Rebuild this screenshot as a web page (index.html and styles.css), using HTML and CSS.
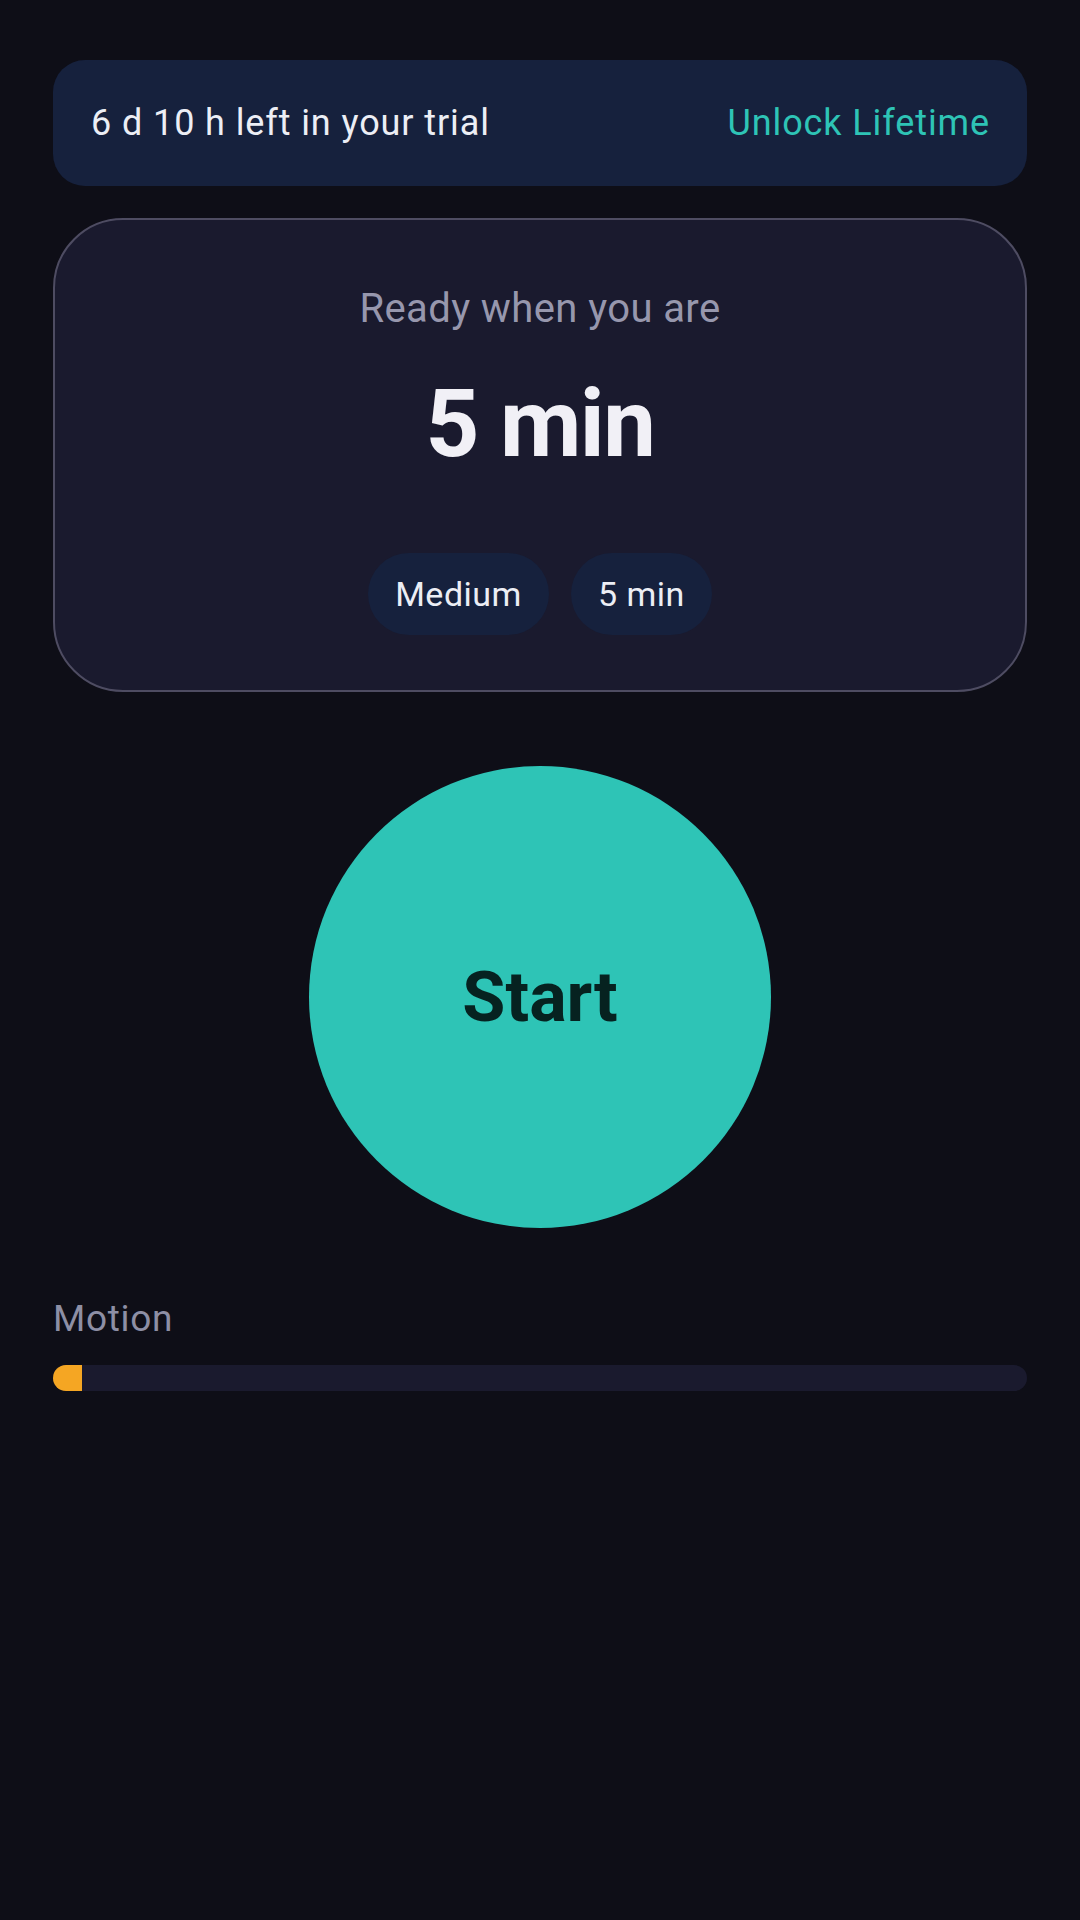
FILE: index.html
```html
<!DOCTYPE html>
<html lang="en">

<head>
    <meta charset="UTF-8" />
    <meta name="viewport" content="width=device-width, initial-scale=1.0" />
    <title>Session</title>
    <link rel="stylesheet" href="styles.css">
</head>

<body>
    <div class="trial">
        <span class="trial-left">6 d 10 h left in your trial</span>
        <a class="trial-unlock" href="#">Unlock Lifetime</a>
    </div>

    <div class="card">
        <p class="ready">Ready when you are</p>
        <p class="duration">5 min</p>
        <div class="chips">
            <span class="chip">Medium</span>
            <span class="chip">5 min</span>
        </div>
    </div>

    <button class="start" type="button">Start</button>

    <div class="motion">
        <p class="motion-label">Motion</p>
        <div class="motion-track">
            <div class="motion-fill" style="width: 3%;"></div>
        </div>
    </div>
</body>

</html>
```

FILE: styles.css
```css
body {
    font-family: Roboto, "Noto Sans", sans-serif;
    background-color: #0e0e17;
    margin: 0;
    padding: 60px 53px;
    display: flex;
    flex-direction: column;
    min-height: 100vh;
    box-sizing: border-box;
}

p {
    margin: 0;
}

.trial {
    height: 126px;
    background-color: #16213d;
    border-radius: 32px;
    padding: 0 37px 0 38px;
    display: flex;
    align-items: center;
    justify-content: space-between;
    font-size: 36px;
    line-height: 44px;
    letter-spacing: 0.9px;
}

.trial-left {
    color: #eceef5;
}

.trial-unlock {
    color: #2ec4b6;
    text-decoration: none;
}

.card {
    margin-top: 32px;
    background-color: #1a1a2e;
    border: 2px solid #4e4c62;
    border-radius: 70px;
    padding: 65px 30px 55px;
    text-align: center;
}

.ready {
    font-size: 40px;
    line-height: 48px;
    letter-spacing: 0.4px;
    color: #9797ad;
}

.duration {
    margin-top: 34px;
    font-size: 94px;
    line-height: 115px;
    font-weight: 700;
    letter-spacing: -1.5px;
    color: #f1f0f6;
}

.chips {
    margin-top: 71px;
    display: flex;
    justify-content: center;
    gap: 22px;
}

.chip {
    background-color: #16213d;
    color: #eceef5;
    font-size: 34px;
    line-height: 40px;
    letter-spacing: 0.5px;
    padding: 21px 27px;
    border-radius: 41px;
}

.start {
    align-self: center;
    margin-top: 74px;
    width: 462px;
    height: 462px;
    border: none;
    border-radius: 50%;
    background-color: #2ec4b6;
    color: #062220;
    font-family: inherit;
    font-size: 70px;
    font-weight: 700;
    cursor: pointer;
}

.motion {
    margin-top: 69px;
}

.motion-label {
    font-size: 37px;
    line-height: 44px;
    letter-spacing: 0.7px;
    color: #8d8fa5;
}

.motion-track {
    margin-top: 24px;
    height: 26px;
    border-radius: 13px;
    background-color: #1a1a2e;
    overflow: hidden;
}

.motion-fill {
    height: 100%;
    background-color: #f5a623;
}
```
